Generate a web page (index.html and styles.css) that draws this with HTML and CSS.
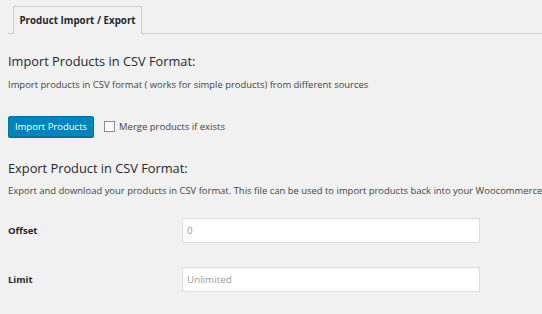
FILE: index.html
```html
<!DOCTYPE html>
<html>
<head>
<meta charset="utf-8">
<link rel="stylesheet" href="styles.css">
</head>
<body>
<div class="wrap">
  <nav class="tabs">
    <span class="tab">Product Import / Export</span>
  </nav>
  <section class="section">
    <h2 class="title">Import Products in CSV Format:</h2>
    <p class="desc">Import products in CSV format ( works for simple products) from different sources</p>
    <div class="actions">
      <button class="btn" type="button">Import Products</button>
      <label class="check"><span class="box"></span>Merge products if exists</label>
    </div>
  </section>
  <section class="section export">
    <h2 class="title">Export Product in CSV Format:</h2>
    <p class="desc nowrap">Export and download your products in CSV format. This file can be used to import products back into your Woocommerce</p>
    <div class="form">
      <div class="row">
        <span class="label">Offset</span>
        <input class="field" type="text" placeholder="0">
      </div>
      <div class="row">
        <span class="label">Limit</span>
        <input class="field" type="text" placeholder="Unlimited">
      </div>
    </div>
  </section>
</div>
</body>
</html>
```
FILE: styles.css
```css
html, body {
  margin: 0;
  padding: 0;
  background: #f1f1f1;
  overflow: hidden;
}
body {
  font-family: "Open Sans", "Noto Sans", sans-serif;
  color: #444;
  width: 542px;
  height: 314px;
}
.wrap {
  padding: 6px 0 0 8px;
}
.tabs {
  display: flex;
  border-bottom: 1px solid #ccc;
  padding-left: 5px;
  height: 27px;
}
.tab {
  display: flex;
  align-items: center;
  justify-content: center;
  white-space: nowrap;
  padding: 0 8px;
  border: 1px solid #ccc;
  border-bottom: none;
  background: #f1f1f1;
  font-size: 9.8px;
  font-weight: 700;
  color: #23282d;
  height: 28px;
  margin-bottom: -1px;
  box-sizing: border-box;
  width: 129px;
}
.section {
  display: flex;
  flex-direction: column;
}
.title {
  margin: 18px 0 0 0;
  font-size: 12.8px;
  font-weight: 400;
  color: #23282d;
  line-height: 18px;
}
.desc {
  margin: 8px 0 0 0;
  font-size: 9.45px;
  line-height: 13px;
  color: #444;
}
.nowrap {
  white-space: nowrap;
}
.actions {
  display: flex;
  align-items: center;
  margin-top: 25px;
  gap: 10px;
}
.btn {
  font-family: inherit;
  font-size: 9.5px;
  color: #fff;
  background: #0085ba;
  border: 1px solid #0073aa;
  border-radius: 2px;
  height: 21px;
  width: 86px;
  padding: 0;
  box-shadow: 0 1px 0 #006799;
}
.check {
  display: flex;
  align-items: center;
  gap: 4px;
  font-size: 9.5px;
  color: #444;
}
.box {
  width: 9px;
  height: 9px;
  border: 1px solid #8c8c8c;
  background: #fff;
}
.export .title {
  margin-top: 22px;
}
.export .desc {
  margin-top: 7px;
}
.form {
  display: flex;
  flex-direction: column;
  margin-top: 21px;
  gap: 24px;
}
.row {
  display: flex;
  align-items: center;
}
.label {
  width: 174px;
  font-size: 9.5px;
  font-weight: 700;
  color: #23282d;
}
.field {
  width: 298px;
  height: 25px;
  box-sizing: border-box;
  border: 1px solid #ddd;
  background: #fff;
  font-family: inherit;
  font-size: 9.8px;
  padding: 0 4px;
  box-shadow: inset 0 1px 2px rgba(0,0,0,0.04);
}
.field::placeholder {
  color: #999;
}
```
